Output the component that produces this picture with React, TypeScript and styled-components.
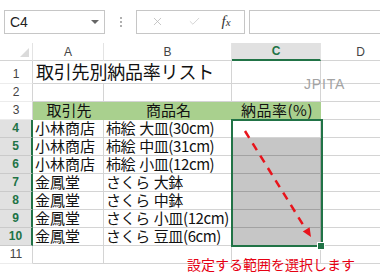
import React from "react";
import styled, { createGlobalStyle } from "styled-components";
import { X, Check } from "lucide-react";

const GlobalStyle = createGlobalStyle`
  html, body {
    margin: 0;
    background: #fff;
    overflow: hidden;
  }
  body {
    font-family: "Noto Sans CJK JP", "Liberation Sans", sans-serif;
  }
`;

const GREEN = "#217346";
const GRID = "#d4d4d4";

type Fill = "none" | "green" | "sel";

type RowData = { a: string; b: string };

const rows: RowData[] = [
  { a: "小林商店", b: "柿絵 大皿(30cm)" },
  { a: "小林商店", b: "柿絵 中皿(31cm)" },
  { a: "小林商店", b: "柿絵 小皿(12cm)" },
  { a: "金鳳堂", b: "さくら 大鉢" },
  { a: "金鳳堂", b: "さくら 中鉢" },
  { a: "金鳳堂", b: "さくら 小皿(12cm)" },
  { a: "金鳳堂", b: "さくら 豆皿(6cm)" },
];

const Page = styled.div`
  position: relative;
  width: 380px;
  height: 274px;
  overflow: hidden;
  background: #fff;
`;

const FormulaBar = styled.div`
  display: flex;
  align-items: center;
  height: 43px;
  padding-left: 4px;
  box-sizing: border-box;
`;

const NameBox = styled.div`
  box-sizing: border-box;
  width: 101px;
  height: 24px;
  border: 1px solid #c6c6c6;
  display: flex;
  align-items: center;
  justify-content: space-between;
  padding: 0 5px;
  font: 14px "Liberation Sans", Arial, sans-serif;
  color: #222;
`;

const DropArrow = styled.span`
  width: 0;
  height: 0;
  border-left: 4px solid transparent;
  border-right: 4px solid transparent;
  border-top: 4px solid #666;
`;

const Dots = styled.div`
  width: 31px;
  display: flex;
  flex-direction: column;
  align-items: center;
  gap: 2px;
  span {
    width: 2px;
    height: 2px;
    background: #b0b0b0;
  }
`;

const ActionBox = styled.div`
  box-sizing: border-box;
  width: 109px;
  height: 24px;
  border: 1px solid #c6c6c6;
  display: grid;
  grid-template-columns: 41px 33px 30px;
  align-items: center;
  justify-items: center;
`;

const Fx = styled.span`
  font: italic 15px "Liberation Serif", serif;
  color: #333;
  small {
    font-size: 11px;
  }
`;

const FormulaInput = styled.div`
  box-sizing: border-box;
  flex: 1;
  height: 24px;
  margin-left: 4px;
  border: 1px solid #c6c6c6;
  border-right: none;
`;

const Sheet = styled.div`
  display: grid;
  grid-template-columns: 33px 71px 128px 89px 80px;
  grid-template-rows: 18px 23px repeat(10, 18px);
`;

const Corner = styled.div`
  box-sizing: border-box;
  border-right: 1px solid #e3e3e3;
  border-bottom: 1px solid ${GRID};
  display: flex;
  align-items: flex-end;
  justify-content: flex-end;
  padding: 0 3px 3px 0;
`;

const ColHead = styled.div<{ $active?: boolean }>`
  box-sizing: border-box;
  display: flex;
  align-items: center;
  justify-content: center;
  font: ${(p) => (p.$active ? 700 : 400)} 12px "Liberation Sans", Arial, sans-serif;
  color: ${(p) => (p.$active ? GREEN : "#444")};
  background: ${(p) => (p.$active ? "#e1e1e1" : "#fff")};
  border-right: 1px solid #e3e3e3;
  border-bottom: ${(p) => (p.$active ? `2px solid ${GREEN}` : `1px solid ${GRID}`)};
`;

const RowHead = styled.div<{ $active?: boolean }>`
  box-sizing: border-box;
  display: flex;
  align-items: flex-end;
  justify-content: center;
  padding-bottom: 2px;
  font: ${(p) => (p.$active ? 700 : 400)} 12px/14px "Liberation Sans", Arial, sans-serif;
  color: ${(p) => (p.$active ? GREEN : "#444")};
  background: ${(p) => (p.$active ? "#e1e1e1" : "#fff")};
  border-right: ${(p) => (p.$active ? `2px solid ${GREEN}` : `1px solid ${GRID}`)};
  border-bottom: 1px solid ${(p) => (p.$active ? "#cacaca" : "#ececec")};
`;

const fillBg = { none: "#fff", green: "#a9d08e", sel: "#c6c6c6" };
const fillLine = { none: GRID, green: "#a9d08e", sel: "#a2a2a2" };

const Cell = styled.div<{
  $fill?: Fill;
  $center?: boolean;
  $span?: number;
  $tight?: boolean;
}>`
  box-sizing: border-box;
  grid-column: span ${(p) => p.$span ?? 1};
  display: flex;
  align-items: flex-end;
  justify-content: ${(p) => (p.$center ? "center" : "flex-start")};
  padding: 0 0 1px 2px;
  overflow: visible;
  white-space: pre;
  letter-spacing: ${(p) => (p.$tight ? "-0.4px" : "0")};
  word-spacing: ${(p) => (p.$tight ? "1px" : "3px")};
  font-size: 15px;
  line-height: 16px;
  color: #111;
  background: ${(p) => fillBg[p.$fill ?? "none"]};
  border-right: 1px solid ${(p) => fillLine[p.$fill ?? "none"]};
  border-bottom: 1px solid ${(p) => fillLine[p.$fill ?? "none"]};
`;

const TitleCell = styled(Cell)`
  font-size: 18px;
  line-height: 20px;
  padding: 0 0 2px 3px;
  letter-spacing: -0.2px;
`;

const RateHead = styled(Cell)`
  letter-spacing: 0.5px;
`;

const Selection = styled.div`
  position: absolute;
  left: 231px;
  top: 119px;
  width: 92px;
  height: 128px;
  box-sizing: border-box;
  border: 2px solid ${GREEN};
  pointer-events: none;
`;

const FillHandle = styled.div`
  position: absolute;
  left: 317px;
  top: 242px;
  width: 6px;
  height: 6px;
  background: ${GREEN};
  border: 1px solid #fff;
`;

const Watermark = styled.div`
  position: absolute;
  left: 304px;
  top: 77px;
  font: 14px/14px "Liberation Sans", Arial, sans-serif;
  letter-spacing: 0.8px;
  color: #a3a3a3;
`;

const Caption = styled.div`
  position: absolute;
  left: 187px;
  top: 255px;
  font-size: 14px;
  line-height: 18px;
  color: #e60012;
  white-space: nowrap;
`;

const ArrowLayer = styled.svg`
  position: absolute;
  left: 0;
  top: 0;
  pointer-events: none;
`;

const columns = ["A", "B", "C", "D"];

export default function App() {
  return (
    <Page>
      <GlobalStyle />
      <FormulaBar>
        <NameBox>
          <span>C4</span>
          <DropArrow />
        </NameBox>
        <Dots>
          <span />
          <span />
          <span />
        </Dots>
        <ActionBox>
          <X size={13} strokeWidth={1.4} color="#b5b5b5" />
          <Check size={13} strokeWidth={1.4} color="#c8c8c8" />
          <Fx>
            f<small>x</small>
          </Fx>
        </ActionBox>
        <FormulaInput />
      </FormulaBar>

      <Sheet>
        <Corner>
          <svg width="9" height="9" viewBox="0 0 9 9">
            <polygon points="9,0 9,9 0,9" fill="#dadada" />
          </svg>
        </Corner>
        {columns.map((c) => (
          <ColHead key={c} $active={c === "C"}>
            {c}
          </ColHead>
        ))}

        <RowHead>1</RowHead>
        <TitleCell $span={2}>取引先別納品率リスト</TitleCell>
        <Cell />
        <Cell />

        <RowHead>2</RowHead>
        <Cell />
        <Cell />
        <Cell />
        <Cell />

        <RowHead>3</RowHead>
        <Cell $fill="green" $center>
          取引先
        </Cell>
        <Cell $fill="green" $center>
          商品名
        </Cell>
        <RateHead $fill="green" $center>
          納品率(%)
        </RateHead>
        <Cell />

        {rows.map((r, i) => (
          <React.Fragment key={i}>
            <RowHead $active>{i + 4}</RowHead>
            <Cell>{r.a}</Cell>
            <Cell $tight>{r.b}</Cell>
            <Cell $fill={i === 0 ? "none" : "sel"} />
            <Cell />
          </React.Fragment>
        ))}

        <RowHead>11</RowHead>
        <Cell />
        <Cell />
        <Cell />
        <Cell />
      </Sheet>

      <Selection />
      <FillHandle />
      <Watermark>JPITA</Watermark>

      <ArrowLayer width="380" height="274" viewBox="0 0 380 274">
        <line
          x1="245"
          y1="131"
          x2="306"
          y2="229.5"
          stroke="#e8141c"
          strokeWidth="2.5"
          strokeDasharray="8 6.5"
        />
        <polygon points="311,237 302.8,231.5 309.6,227.3" fill="#e8141c" />
      </ArrowLayer>

      <Caption>設定する範囲を選択します</Caption>
    </Page>
  );
}
